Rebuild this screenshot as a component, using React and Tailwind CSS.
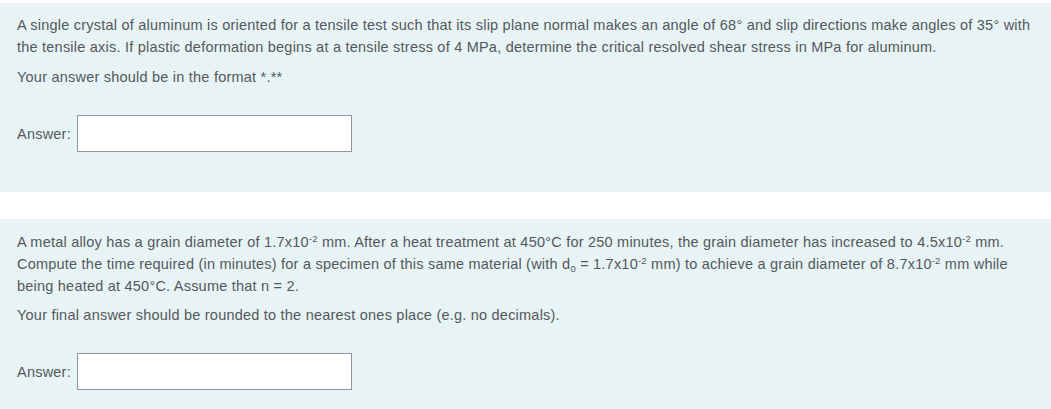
import React from "react";

const font = { fontFamily: "'Liberation Sans', Arial, sans-serif" };

function Sup({ children }) {
  return <span className="relative -top-[5px] text-[9.5px] leading-none">{children}</span>;
}
function Sub({ children }) {
  return <span className="relative top-[3px] text-[9.5px] leading-none">{children}</span>;
}

function AnswerRow() {
  return (
    <div className="flex items-center">
      <span className="w-[60px]">Answer:</span>
      <input
        type="text"
        className="w-[275px] h-[37px] bg-white border border-[#8f959e] outline-none px-2"
      />
    </div>
  );
}

export default function App() {
  return (
    <div
      className="w-[1051px] h-[409px] bg-white overflow-hidden text-[14.5px] leading-[22px] tracking-[0.22px] text-[#54585c]"
      style={font}
    >
      <div className="mt-[3px] h-[189px] bg-[#e7f3f5] pl-[17px] pr-[10px] pt-[11px]">
        <p>
          A single crystal of aluminum is oriented for a tensile test such that its slip plane normal makes an angle of 68° and slip directions make angles of 35° with the tensile axis. If plastic deformation begins at a tensile stress of 4 MPa, determine the critical resolved shear stress in MPa for aluminum.
        </p>
        <p className="mt-[8px]">Your answer should be in the format *.**</p>
        <div className="mt-[27px]">
          <AnswerRow />
        </div>
      </div>
      <div className="mt-[27px] h-[190px] bg-[#e7f3f5] pl-[17px] pr-[10px] pt-[12px]">
        <p>
          A metal alloy has a grain diameter of 1.7x10<Sup>-2</Sup> mm. After a heat treatment at 450°C for 250 minutes, the grain diameter has increased to 4.5x10<Sup>-2</Sup> mm. Compute the time required (in minutes) for a specimen of this same material (with d<Sub>0</Sub> = 1.7x10<Sup>-2</Sup> mm) to achieve a grain diameter of 8.7x10<Sup>-2</Sup> mm while being heated at 450°C. Assume that n = 2.
        </p>
        <p className="mt-[7px]">Your final answer should be rounded to the nearest ones place (e.g. no decimals).</p>
        <div className="mt-[27px]">
          <AnswerRow />
        </div>
      </div>
    </div>
  );
}
